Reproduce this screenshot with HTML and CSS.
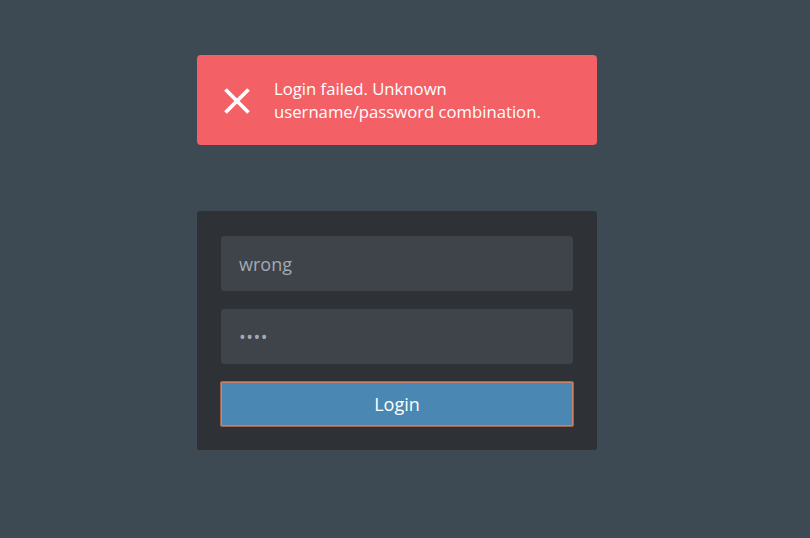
FILE: index.html
```html
<!DOCTYPE html>
<html>
<head>
<meta charset="utf-8">
<link rel="stylesheet" href="styles.css">
</head>
<body>
<main class="page">
  <div class="alert">
    <svg class="alert-icon" width="28" height="28" viewBox="0 0 28 28">
      <path d="M2.5 2.5 L25.5 25.5 M25.5 2.5 L2.5 25.5" stroke="#fff" stroke-width="3.8" stroke-linecap="butt"/>
    </svg>
    <p class="alert-text">Login failed. Unknown username/password combination.</p>
  </div>
  <form class="login">
    <div class="field">wrong</div>
    <div class="field field-pass">••••</div>
    <button type="button" class="btn">Login</button>
  </form>
</main>
</body>
</html>
```
FILE: styles.css
```css
html, body {
  margin: 0;
  padding: 0;
  background: #3d4a53;
  font-family: "Open Sans", "Noto Sans", sans-serif;
}
body {
  padding-right: 16px;
}
.page {
  width: 400px;
  margin: 0 auto;
  padding-top: 55px;
  display: flex;
  flex-direction: column;
}
.alert {
  height: 90px;
  box-sizing: border-box;
  background: #f36166;
  border-radius: 4px;
  display: flex;
  align-items: center;
  padding-left: 26px;
  gap: 23px;
}
.alert-icon {
  flex: none;
  margin-top: 2px;
}
.alert-text {
  margin: 0;
  color: #fff;
  font-size: 16.7px;
  line-height: 23px;
  width: 300px;
}
.login {
  margin: 66px 0 0;
  background: #2e3236;
  border-radius: 3px;
  border-bottom: 1px solid #43484d;
  padding: 25px 24px 23px;
  display: flex;
  flex-direction: column;
}
.field {
  height: 55px;
  background: #3f434a;
  border-radius: 3px;
  color: #a2aab2;
  font-size: 18px;
  line-height: 56px;
  padding-left: 18px;
}
.field + .field {
  margin-top: 18px;
}
.field-pass {
  font-size: 18px;
  letter-spacing: 0.5px;
}
.btn {
  -webkit-appearance: none;
  appearance: none;
  margin-top: 17px;
  height: 46px;
  width: calc(100% + 2px);
  margin-left: -1px;
  box-sizing: border-box;
  background: #4a88b3;
  border: 1px solid #a5634e;
  box-shadow: inset 0 0 0 1px #c98569;
  border-radius: 2px;
  color: #fff;
  font-family: "Open Sans", "Noto Sans", sans-serif;
  font-size: 18px;
  padding: 0;
}
```
